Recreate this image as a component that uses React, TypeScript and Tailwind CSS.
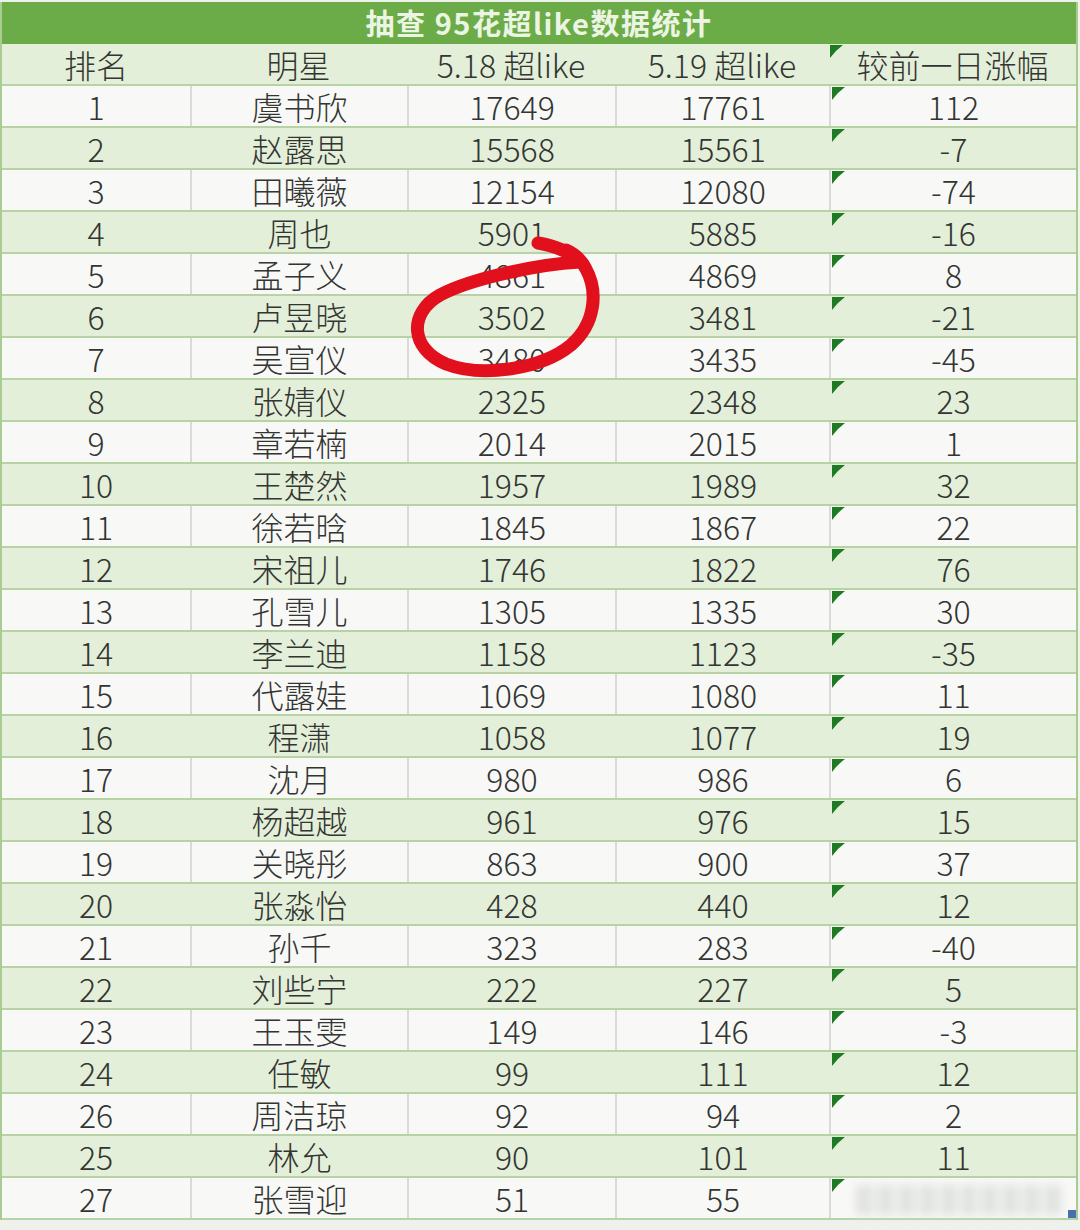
import React from "react";

type Row = { rank: string; name: string; d18: string; d19: string; diff: string };

const ROWS: Row[] = [
  { rank: "1", name: "虞书欣", d18: "17649", d19: "17761", diff: "112" },
  { rank: "2", name: "赵露思", d18: "15568", d19: "15561", diff: "-7" },
  { rank: "3", name: "田曦薇", d18: "12154", d19: "12080", diff: "-74" },
  { rank: "4", name: "周也", d18: "5901", d19: "5885", diff: "-16" },
  { rank: "5", name: "孟子义", d18: "4861", d19: "4869", diff: "8" },
  { rank: "6", name: "卢昱晓", d18: "3502", d19: "3481", diff: "-21" },
  { rank: "7", name: "吴宣仪", d18: "3480", d19: "3435", diff: "-45" },
  { rank: "8", name: "张婧仪", d18: "2325", d19: "2348", diff: "23" },
  { rank: "9", name: "章若楠", d18: "2014", d19: "2015", diff: "1" },
  { rank: "10", name: "王楚然", d18: "1957", d19: "1989", diff: "32" },
  { rank: "11", name: "徐若晗", d18: "1845", d19: "1867", diff: "22" },
  { rank: "12", name: "宋祖儿", d18: "1746", d19: "1822", diff: "76" },
  { rank: "13", name: "孔雪儿", d18: "1305", d19: "1335", diff: "30" },
  { rank: "14", name: "李兰迪", d18: "1158", d19: "1123", diff: "-35" },
  { rank: "15", name: "代露娃", d18: "1069", d19: "1080", diff: "11" },
  { rank: "16", name: "程潇", d18: "1058", d19: "1077", diff: "19" },
  { rank: "17", name: "沈月", d18: "980", d19: "986", diff: "6" },
  { rank: "18", name: "杨超越", d18: "961", d19: "976", diff: "15" },
  { rank: "19", name: "关晓彤", d18: "863", d19: "900", diff: "37" },
  { rank: "20", name: "张淼怡", d18: "428", d19: "440", diff: "12" },
  { rank: "21", name: "孙千", d18: "323", d19: "283", diff: "-40" },
  { rank: "22", name: "刘些宁", d18: "222", d19: "227", diff: "5" },
  { rank: "23", name: "王玉雯", d18: "149", d19: "146", diff: "-3" },
  { rank: "24", name: "任敏", d18: "99", d19: "111", diff: "12" },
  { rank: "26", name: "周洁琼", d18: "92", d19: "94", diff: "2" },
  { rank: "25", name: "林允", d18: "90", d19: "101", diff: "11" },
  { rank: "27", name: "张雪迎", d18: "51", d19: "55", diff: "" },
];

function Flag() {
  return (
    <svg viewBox="0 0 13 13" className="absolute left-[1px] top-[1px] h-[13px] w-[13px]" aria-hidden>
      <path d="M0 0H13Q6 5 0 13Z" fill="#1f7a24" />
    </svg>
  );
}

// blurred watermark over the last cell
function Watermark() {
  return (
    <div className="flex h-[36px] w-[215px] items-center gap-[4px] self-end pl-[10px] blur-[4px]">
      {[0, 1, 2, 3, 4, 5, 6, 7, 8, 9].map((i) => (
        <div key={i} className="h-[30px] flex-1 bg-[#e1e3e0]" />
      ))}
    </div>
  );
}

function DataRow({ r, idx }: { r: Row; idx: number }) {
  const green = idx % 2 === 1;
  const bg = green ? "bg-[#e3efd9]" : "bg-[#f8f9f7]";
  const sep = green ? "border-[#e3efd9]" : "border-[#d9dcd6]";
  const last = idx === ROWS.length - 1;
  return (
    <div
      className={`grid h-[42px] grid-cols-[188px_217px_208px_214px_1fr] border-b-2 border-b-[#b7d2a4] ${bg}`}
    >
      <div className="flex items-center justify-center">{r.rank}</div>
      <div className={`flex items-center justify-center border-l-2 ${sep}`}>{r.name}</div>
      <div className={`flex items-center justify-center border-l-2 ${sep}`}>{r.d18}</div>
      <div className={`flex items-center justify-center border-l-2 ${sep}`}>{r.d19}</div>
      <div className={`relative flex items-center justify-center border-l-2 ${sep}`}>
        <Flag />
        {last ? <Watermark /> : r.diff}
      </div>
    </div>
  );
}

export default function App() {
  return (
    <div className="relative h-[1230px] w-[1080px] overflow-hidden bg-[#eef1ec] pt-[2px] font-['Noto_Sans_CJK_SC','Noto_Sans',sans-serif] text-[32px] font-light leading-none text-[#333532]">
      <div className="w-[1078px] border-x-2 border-[#a9cc92]">
        <div className="h-[42px] bg-[#6cac48] pb-[2px] text-center text-[29px] font-bold leading-[40px] tracking-[1.5px] text-[#ecf5e4]">
          抽查 95花超like数据统计
        </div>
        <div className="grid h-[42px] grid-cols-[188px_217px_208px_214px_1fr] border-b-2 border-b-[#b7d2a4] bg-[#e3efd9]">
          <div className="flex items-center justify-center">排名</div>
          <div className="flex items-center justify-center">明星</div>
          <div className="flex items-center justify-center">5.18 超like</div>
          <div className="flex items-center justify-center">5.19 超like</div>
          <div className="relative flex items-center justify-center">
            <Flag />
            较前一日涨幅
          </div>
        </div>
        {ROWS.map((r, i) => (
          <DataRow key={r.rank + r.name} r={r} idx={i} />
        ))}
      </div>
      <div className="absolute bottom-[12px] right-[4px] h-[8px] w-[8px] bg-[#4a6fb0]" />
      <svg
        className="pointer-events-none absolute left-0 top-0 h-[1230px] w-[1080px]"
        viewBox="0 0 1080 1230"
        aria-hidden
      >
        <path
          d="M538 243 C556 246 571 253 580 262 C540 264 472 278 440 295 C408 313 410 349 446 364 C482 378 542 369 571 345 C596 323 598 291 586 269 C581 259 573 253 566 250"
          fill="none"
          stroke="#e2101c"
          strokeWidth="13"
          strokeLinecap="round"
          strokeLinejoin="round"
        />
      </svg>
    </div>
  );
}
